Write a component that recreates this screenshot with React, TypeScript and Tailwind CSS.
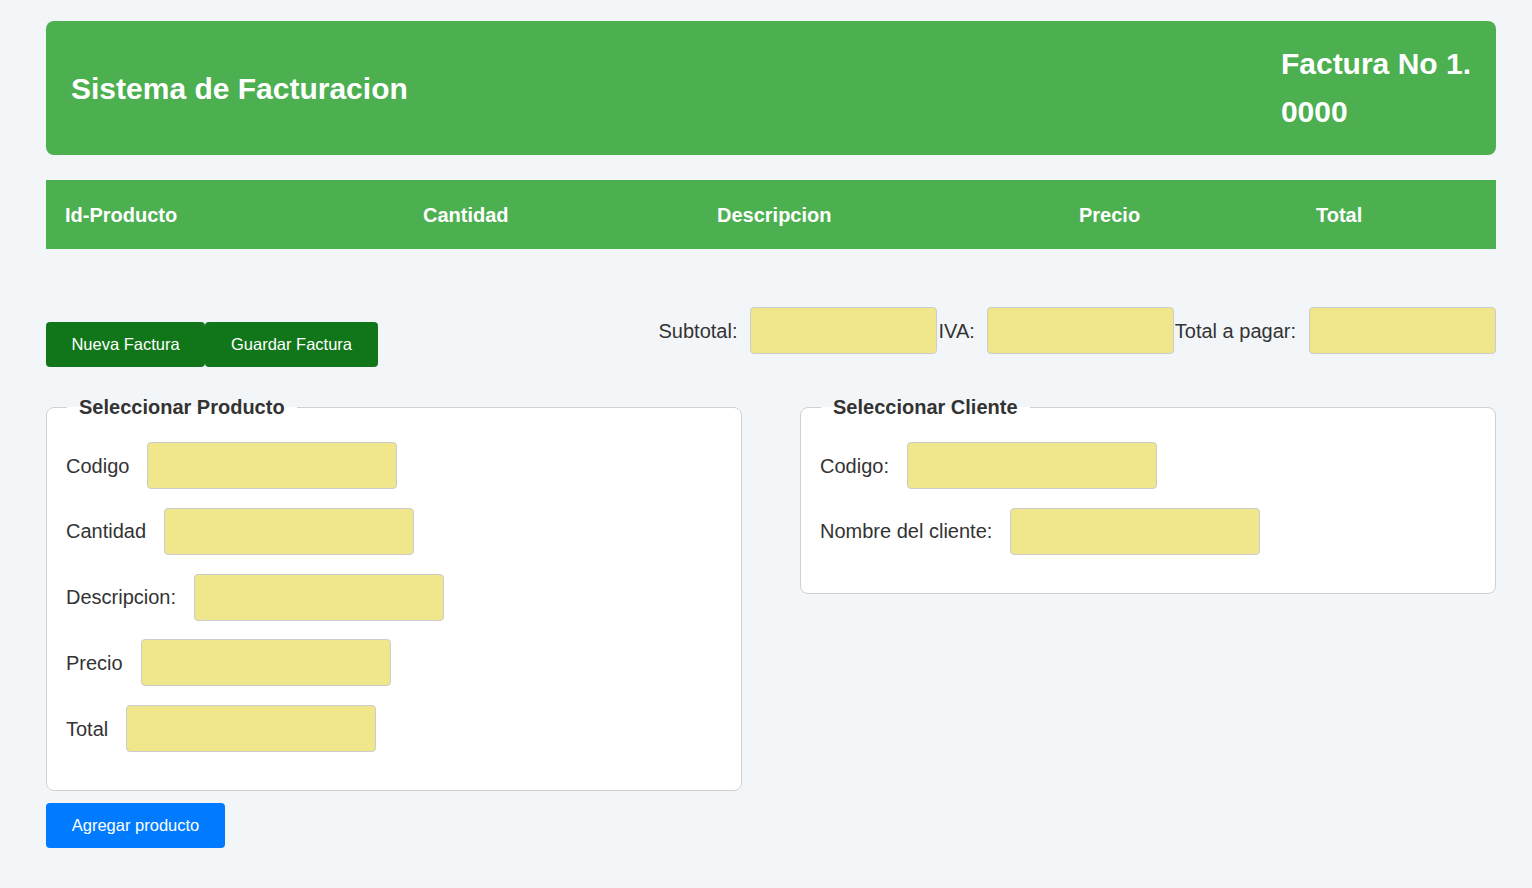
import React from 'react';

const columns = [
  { label: 'Id-Producto', w: 'w-[358px]' },
  { label: 'Cantidad', w: 'w-[294px]' },
  { label: 'Descripcion', w: 'w-[362px]' },
  { label: 'Precio', w: 'w-[237px]' },
  { label: 'Total', w: 'w-[199px]' },
];

const productFields = ['Codigo', 'Cantidad', 'Descripcion:', 'Precio', 'Total'];
const clientFields = ['Codigo:', 'Nombre del cliente:'];

function Field({ label }: { label: string }) {
  return (
    <div className="flex items-center gap-[18px]">
      <label className="text-[20px] text-[#333]">{label}</label>
      <input
        type="text"
        className="h-[47px] w-[250px] rounded-[4px] border border-[#cccccc] bg-[#f0e68c] outline-none"
      />
    </div>
  );
}

function Panel({ title, fields }: { title: string; fields: string[] }) {
  return (
    <fieldset className="w-[48%] rounded-lg border border-[#d0d0d0] bg-white pt-[23px] pr-5 pb-[38px] pl-[19px]">
      <legend className="ml-[1px] px-3 text-[20px] leading-[24px] font-bold text-[#333]">{title}</legend>
      <div className="flex flex-col gap-[18.75px]">
        {fields.map((f) => (
          <Field key={f} label={f} />
        ))}
      </div>
    </fieldset>
  );
}

export default function App() {
  return (
    <div
      className="min-h-screen bg-[#f3f6f9] pt-[21px] pl-[46px] pr-[36px]"
      style={{ fontFamily: '"Liberation Sans", Arial, sans-serif' }}
    >
      {/* Header */}
      <header className="flex h-[134px] items-center justify-between rounded-lg bg-[#4caf50] px-[25px] text-white">
        <h1 className="text-[30px] font-bold">Sistema de Facturacion</h1>
        <h2 className="text-[30px] leading-[48px] font-bold whitespace-nowrap">
          Factura No 1.
          <br />
          0000
        </h2>
      </header>

      {/* Table header */}
      <div className="mt-[25px] flex h-[69px] items-center bg-[#4caf50] text-white">
        {columns.map((c) => (
          <div key={c.label} className={`${c.w} pl-[19px] text-[20px] font-bold`}>
            {c.label}
          </div>
        ))}
      </div>

      {/* Actions and totals */}
      <div className="mt-[58px] flex items-start justify-between">
        <div className="mt-[15px] flex">
          <button className="h-[45px] w-[159px] rounded-[4px] bg-[#11761a] text-[16.5px] text-white">
            Nueva Factura
          </button>
          <button className="h-[45px] w-[173px] rounded-[4px] bg-[#11761a] text-[16.5px] text-white">
            Guardar Factura
          </button>
        </div>
        <div className="flex items-center text-[20px] text-[#333]">
          <label className="mr-[13px]">Subtotal:</label>
          <input className="h-[47px] w-[187px] rounded-[4px] border border-[#cccccc] bg-[#f0e68c] outline-none" />
          <label className="mr-[12px] ml-[1px]">IVA:</label>
          <input className="h-[47px] w-[187px] rounded-[4px] border border-[#cccccc] bg-[#f0e68c] outline-none" />
          <label className="mr-[13px] ml-[1px]">Total a pagar:</label>
          <input className="h-[47px] w-[187px] rounded-[4px] border border-[#cccccc] bg-[#f0e68c] outline-none" />
        </div>
      </div>

      {/* Selection panels */}
      <div className="mt-[28px] flex items-start justify-between">
        <Panel title="Seleccionar Producto" fields={productFields} />
        <Panel title="Seleccionar Cliente" fields={clientFields} />
      </div>

      <button className="mt-[12px] h-[45px] w-[179px] rounded-[4px] bg-[#007bff] text-[16.5px] text-white">
        Agregar producto
      </button>
    </div>
  );
}
